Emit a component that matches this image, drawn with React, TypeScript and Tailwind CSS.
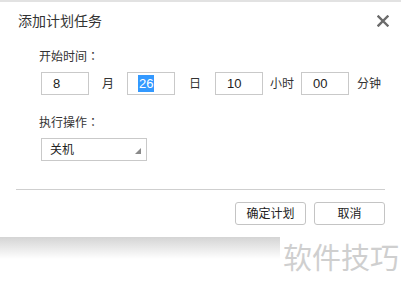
import React from "react";

const font = { fontFamily: '"Liberation Sans", "Noto Sans CJK SC", sans-serif' };
const cjk = { fontFamily: '"Noto Sans CJK SC", sans-serif' };
const colon = { fontFamily: '"Noto Sans CJK TC", sans-serif' };

function Field({ value, selected }: { value: string; selected?: boolean }) {
  return (
    <div className="w-[48px] h-[23px] border border-[#c9c9c9] bg-white flex items-center pl-[10px] text-[13px] text-[#222]">
      {selected ? (
        <span className="bg-[#3399ff] text-white leading-[17px] px-px">{value}</span>
      ) : (
        <span className="px-px">{value}</span>
      )}
    </div>
  );
}

function Unit({ text, w }: { text: string; w: string }) {
  return <div className={`${w} text-center text-[12px] text-[#333]`}>{text}</div>;
}

export default function App() {
  return (
    <div className="w-[401px] h-[291px] bg-white relative overflow-hidden" style={font}>
      <div className="h-[237px] border-t-2 border-[#e2e2e2] bg-white flex flex-col">
        <div className="flex items-center justify-between pl-[18px] pr-[12px] pt-[8px] h-[30px]">
          <span className="text-[14px] text-[#333] leading-[20px]">添加计划任务</span>
          <svg width="12" height="12" viewBox="0 0 12 12" className="mt-[-1px]">
            <path d="M1.5 1.5 L10.5 10.5 M10.5 1.5 L1.5 10.5" stroke="#6b6b6b" strokeWidth="2.4" strokeLinecap="square" />
          </svg>
        </div>
        <div className="pl-[39px] mt-[16px] text-[12px] leading-[16px] text-[#333]" style={cjk}>
          开始时间<span style={colon}>：</span>
        </div>
        <div className="flex items-center pl-[41px] mt-[8px]">
          <Field value="8" />
          <Unit text="月" w="w-[38px]" />
          <Field value="26" selected />
          <Unit text="日" w="w-[40px]" />
          <Field value="10" />
          <Unit text="小时" w="w-[38px]" />
          <Field value="00" />
          <div className="ml-[8px] text-[12px] text-[#333]">分钟</div>
        </div>
        <div className="pl-[39px] mt-[19px] text-[12px] leading-[16px] text-[#333]" style={cjk}>
          执行操作<span style={colon}>：</span>
        </div>
        <div className="pl-[41px] mt-[8px]">
          <div className="relative w-[106px] h-[23px] border border-[#c9c9c9] bg-white flex items-center pl-[8px] text-[12px] text-[#222]">
            关机
            <svg width="6" height="6" viewBox="0 0 6 6" className="absolute right-[5px] bottom-[6px]">
              <path d="M6 0 L6 6 L0 6 Z" fill="#8a8a8a" />
            </svg>
          </div>
        </div>
        <div className="mx-[16px] mt-[28px] border-t border-[#cfcfcf]" />
        <div className="flex justify-end gap-[8px] pr-[16px] mt-[12px]">
          <button className="w-[71px] h-[23px] border border-[#c4c4c4] rounded-[3px] bg-white text-[12px] text-[#222]">确定计划</button>
          <button className="w-[71px] h-[23px] border border-[#c4c4c4] rounded-[3px] bg-white text-[12px] text-[#222]">取消</button>
        </div>
      </div>
      <div className="w-[280px] h-[22px] bg-gradient-to-b from-[#d4d4d4] to-white" />
      <div
        className="absolute left-[283px] top-[236px] text-[29px] leading-[40px] text-[#cfcfcf]"
        style={cjk}
      >
        软件技巧
      </div>
    </div>
  );
}
